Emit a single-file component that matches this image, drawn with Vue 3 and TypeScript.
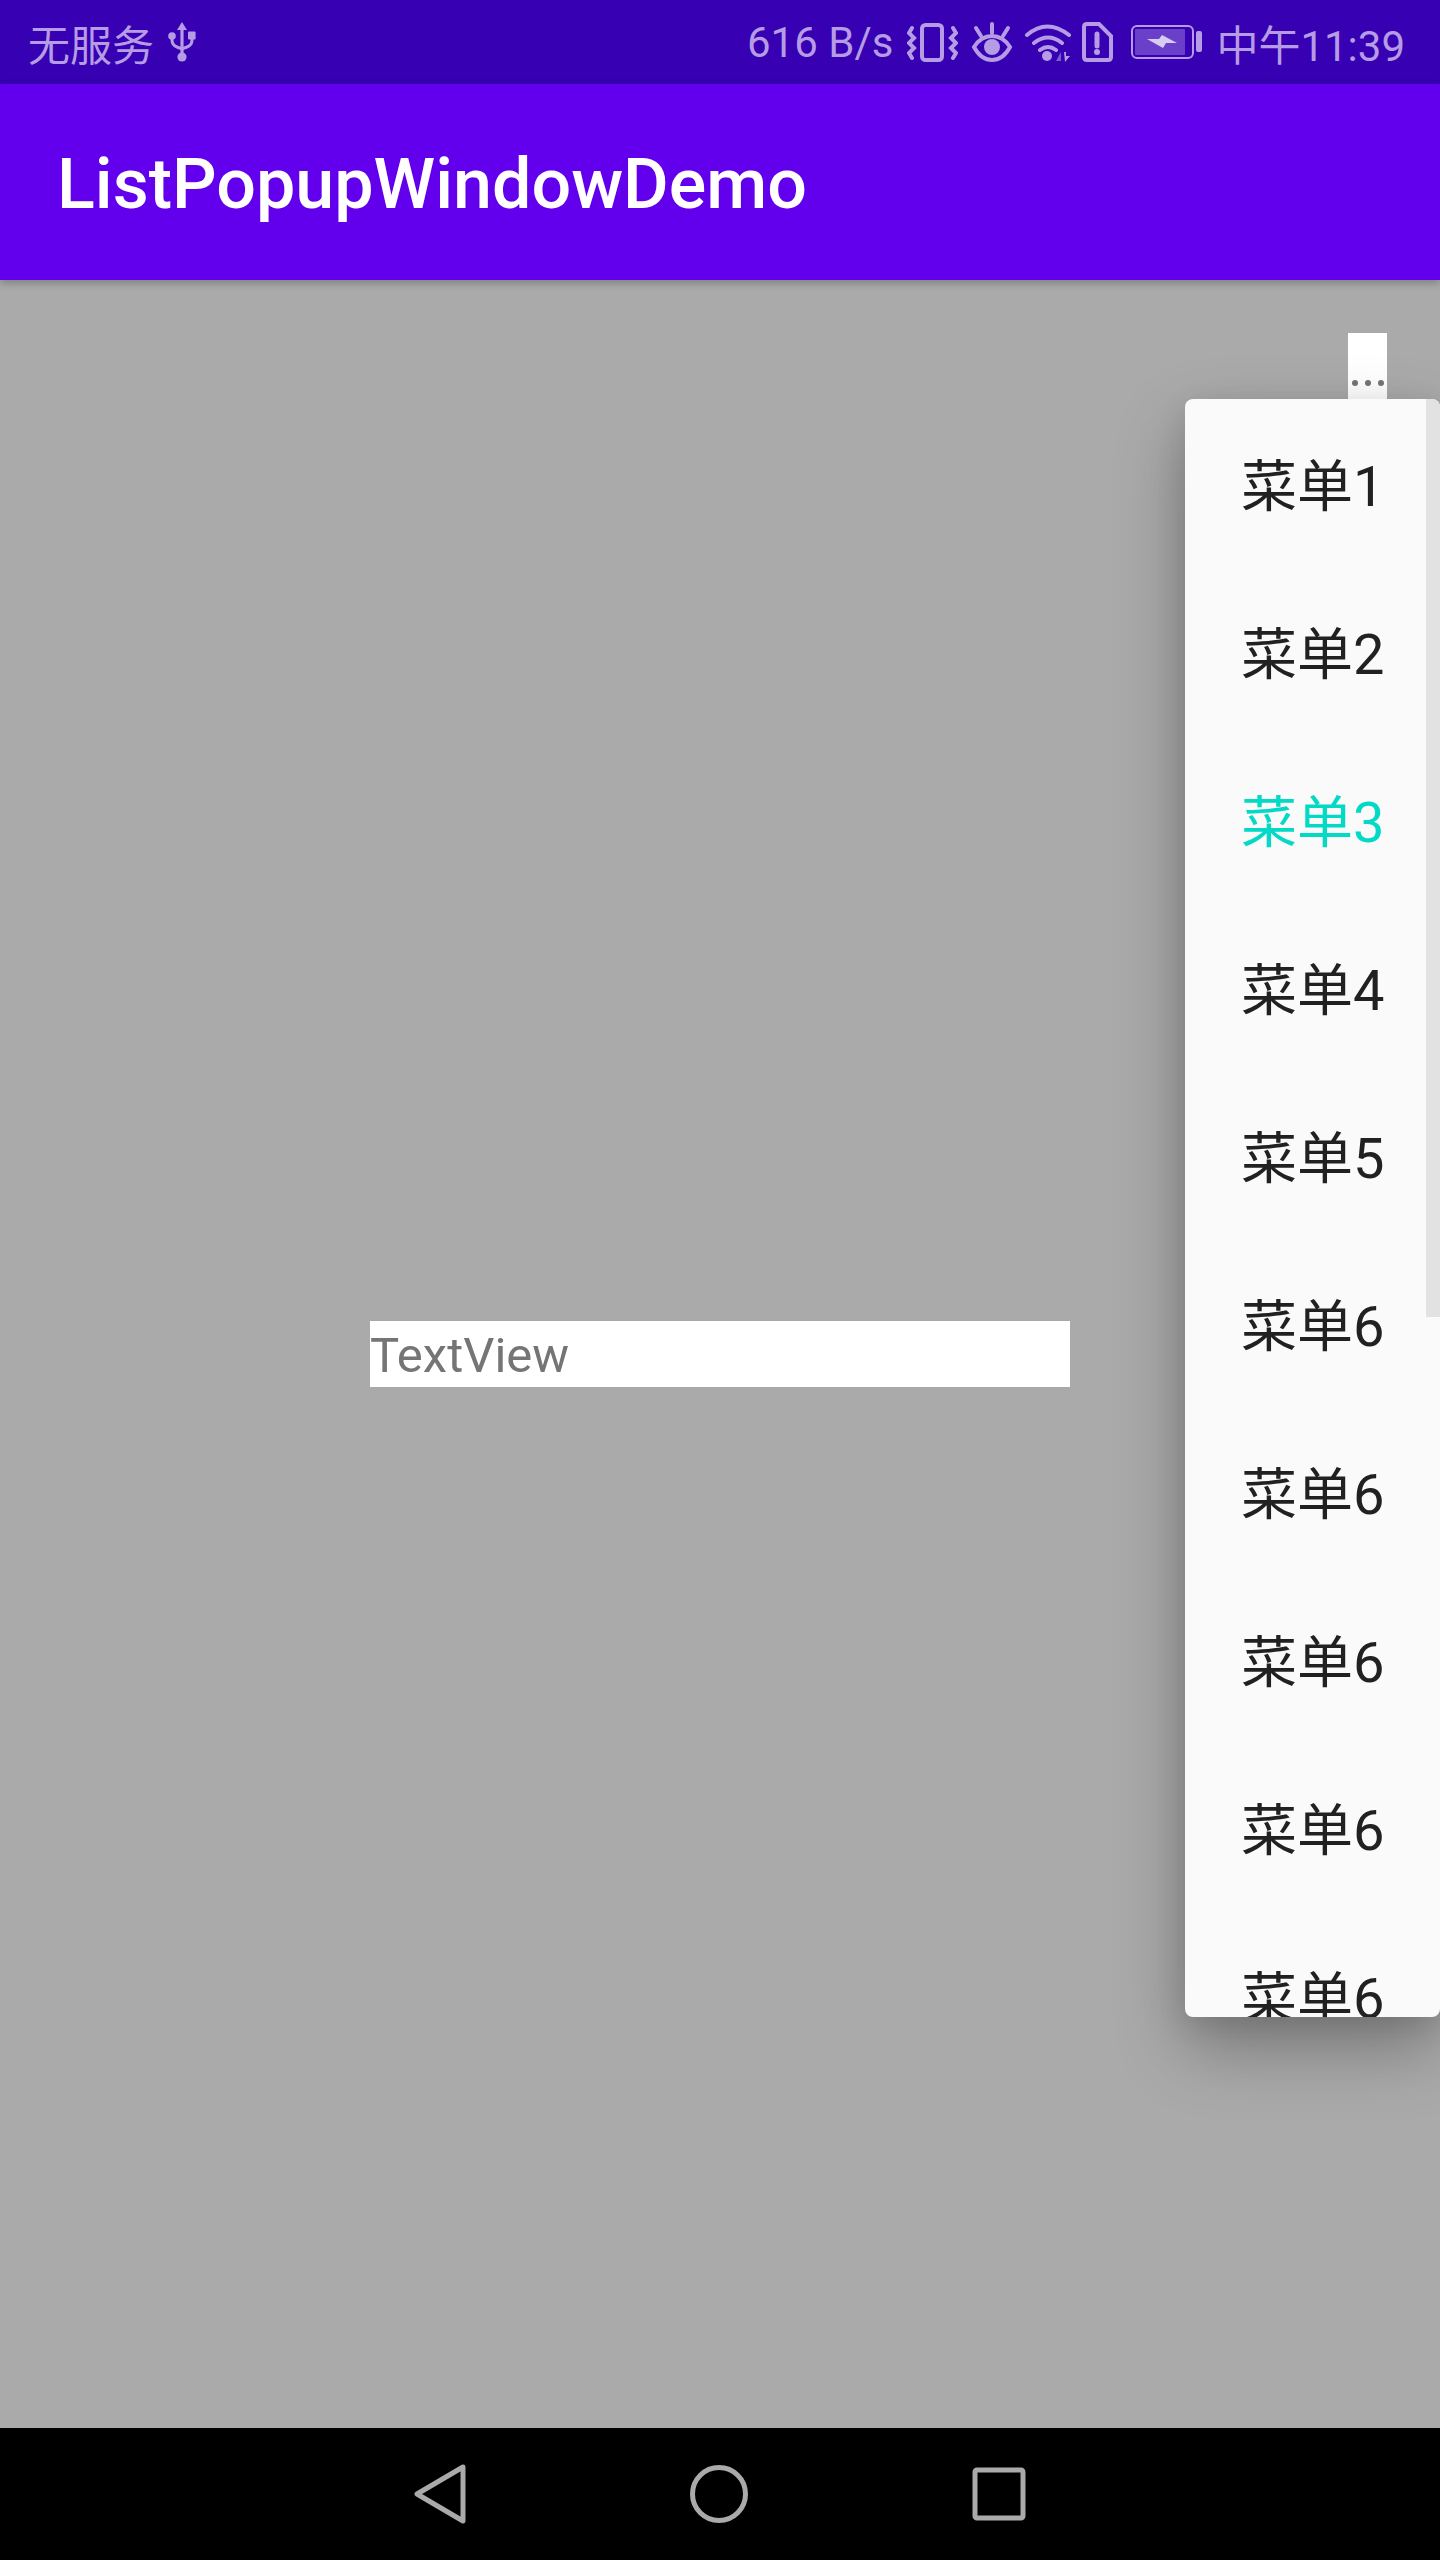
<template>
    <div class="phone">
        <header class="status-bar">
            <div class="status-left">
                <span class="carrier">无服务</span>
                <svg class="usb" width="28" height="40" viewBox="0 0 28 40">
                    <path d="M14 0l5 8h-3.400v26h-3.200V8H9z" />
                    <circle cx="14" cy="35" r="4.600" />
                    <circle cx="4" cy="14" r="3.800" />
                    <rect x="20" y="9.500" width="7.600" height="8" rx="1" />
                    <path class="usb-arm" d="M4 15v3q0 5 5 7l5 2 5-2q5-2 5-7v-3" />
                </svg>
            </div>
            <div class="status-right">
                <span class="speed">616 B/s</span>
                <svg class="vibrate" width="51" height="40" viewBox="0 0 51 40">
                    <rect x="15" y="3" width="20" height="35" rx="3.500" />
                    <path d="M5 6L2 11l5 5-5 5 5 5-5 5 3 5M46 6l3 5-5 5 5 5-5 5 5 5-3 5" />
                </svg>
                <svg class="eye" width="42" height="40" viewBox="0 0 42 40">
                    <path d="M3 25Q10 14 21 14t18 11q-7 13-18 13T3 25z" />
                    <circle class="fill" cx="21" cy="25" r="8" />
                    <path d="M21 2v9M5 6l5 8M37 6l-5 8" />
                </svg>
                <svg class="wifi" width="48" height="40" viewBox="0 0 48 40">
                    <path d="M3 13Q23-4 45 13M10 21q14-11 28 0M16 28q8-6 16 0" />
                    <circle class="fill" cx="23" cy="34" r="5" />
                    <path class="dim" d="M32 39l5-9v9z" />
                    <path class="fill" d="M40 30h2v4h4l-5 6z" />
                </svg>
                <svg class="sim" width="31" height="40" viewBox="0 0 31 40">
                    <path d="M2 5q0-3 3-3h12l12 12v21q0 3-3 3H5q-3 0-3-3z" />
                    <path class="bang" d="M15 12v12" />
                    <circle class="fill" cx="15" cy="30" r="3" />
                </svg>
                <svg class="battery" width="71" height="34" viewBox="0 0 71 34">
                    <rect class="thin" x="1" y="1" width="61" height="32" rx="5" />
                    <rect class="level" x="4" y="4" width="50" height="26" rx="1" />
                    <path class="bolt" d="M16 14h12l3-4 15 8H35l-3 5z" />
                    <rect class="cap" x="65" y="6" width="6" height="21" rx="2" />
                </svg>
                <span class="clock">中午11:39</span>
            </div>
        </header>

        <div class="app-bar">ListPopupWindowDemo</div>

        <main class="content">
            <button class="more-btn">
                <i v-for="n in 3" :key="n"></i>
            </button>
            <div class="text-view">TextView</div>

            <div class="popup">
                <div class="popup-list">
                    <div
                        v-for="(item, idx) in items"
                        :key="idx"
                        class="popup-item"
                        :class="{ active: item === '菜单3' }"
                    >
                        {{ item }}
                    </div>
                </div>
                <div class="scroll-thumb"></div>
            </div>
        </main>

        <footer class="nav-bar">
            <svg width="52" height="60" viewBox="0 0 52 60">
                <path d="M49 3L3 30l46 27z" />
            </svg>
            <svg width="58" height="60" viewBox="0 0 58 60">
                <circle cx="29" cy="30" r="26.500" />
            </svg>
            <svg width="54" height="54" viewBox="0 0 54 54">
                <rect x="3" y="3" width="48" height="48" rx="2" />
            </svg>
        </footer>
    </div>
</template>

<script setup lang="ts">
const items: string[] = [
    '菜单1',
    '菜单2',
    '菜单3',
    '菜单4',
    '菜单5',
    '菜单6',
    '菜单6',
    '菜单6',
    '菜单6',
    '菜单6',
]
</script>

<style scoped>
.phone {
    display: flex;
    flex-direction: column;
    width: 1440px;
    height: 2560px;
    overflow: hidden;
    font-family: Roboto, "Noto Sans CJK SC", sans-serif;
}

.status-bar {
    display: flex;
    justify-content: space-between;
    align-items: center;
    flex: 0 0 84px;
    padding: 0 35px 0 28px;
    background: #3700b3;
    color: #b59ce4;
    font-size: 42px;
}

.status-left,
.status-right {
    display: flex;
    align-items: center;
}

.status-bar svg {
    flex: none;
}

.usb {
    margin-left: 14px;
    fill: #b59ce4;
}

.usb-arm {
    fill: none;
    stroke: #b59ce4;
    stroke-width: 3;
}

.vibrate,
.eye,
.wifi,
.sim {
    fill: none;
    stroke: #b59ce4;
    stroke-width: 4;
    stroke-linecap: round;
}

.fill {
    fill: #b59ce4;
    stroke: none;
}

.dim {
    fill: #7a5ccb;
    stroke: none;
}

.bang {
    stroke-width: 5;
}

.vibrate {
    margin-left: 14px;
}

.eye {
    margin-left: 13px;
}

.wifi {
    margin-left: 11px;
}

.sim {
    margin-left: 10px;
}

.battery {
    margin-left: 18px;
}

.thin {
    fill: none;
    stroke: #b59ce4;
    stroke-width: 2;
}

.level {
    fill: #6a3fc9;
}

.bolt {
    fill: #d8ccf2;
}

.cap {
    fill: #b59ce4;
}

.clock {
    margin-left: 14px;
}

.app-bar {
    display: flex;
    align-items: center;
    flex: 0 0 196px;
    padding: 4px 0 0 57px;
    box-sizing: border-box;
    background: #6200ee;
    color: #fff;
    font-size: 70px;
    font-weight: 500;
    z-index: 1;
    box-shadow: 0 3px 8px rgba(0, 0, 0, 0.25);
}

.content {
    position: relative;
    display: grid;
    flex: 1;
    background: #aaa;
}

.more-btn {
    grid-area: 1 / 1;
    justify-self: end;
    display: flex;
    justify-content: center;
    align-items: flex-end;
    gap: 7px;
    width: 39px;
    height: 66px;
    margin: 53px 53px 0 0;
    padding: 0 0 13px;
    border: none;
    background: #fff;
}

.more-btn i {
    width: 6px;
    height: 6px;
    border-radius: 50%;
    background: #757575;
}

.text-view {
    grid-area: 1 / 1;
    place-self: center;
    box-sizing: border-box;
    width: 700px;
    height: 66px;
    padding-top: 3px;
    background: #fff;
    color: #757575;
    font-size: 49px;
    line-height: 63px;
}

.popup {
    position: absolute;
    top: 119px;
    left: 1185px;
    width: 255px;
    height: 1618px;
    overflow: hidden;
    border-radius: 8px;
    background: #fafafa;
    color: #212121;
    box-shadow: 0 30px 70px rgba(0, 0, 0, 0.3), 0 8px 30px rgba(0, 0, 0, 0.1);
}

.popup-list {
    padding: 4px 0 0 56px;
}

.popup-item {
    height: 168px;
    font-size: 56px;
    line-height: 168px;
}

.popup-item.active {
    color: #03dac5;
}

.scroll-thumb {
    position: absolute;
    top: 0;
    right: 0;
    width: 14px;
    height: 918px;
    background: #e2e2e2;
}

.nav-bar {
    display: flex;
    align-items: center;
    justify-content: space-between;
    flex: 0 0 132px;
    padding: 0 414px;
    background: #000;
}

.nav-bar svg {
    fill: none;
    stroke: #aaa;
    stroke-width: 5;
    stroke-linejoin: round;
}
</style>
